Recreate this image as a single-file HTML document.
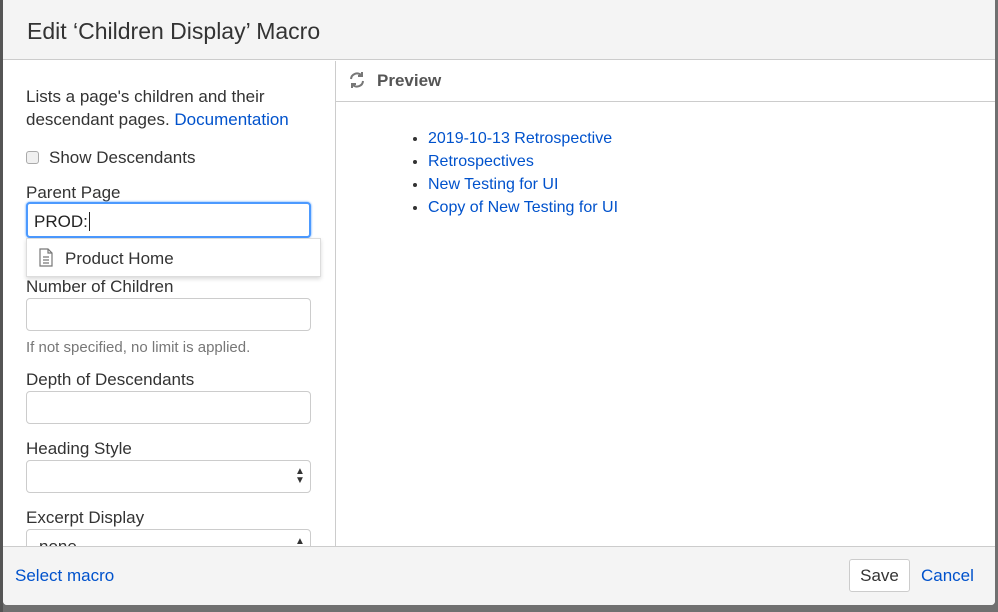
<!DOCTYPE html>
<html><head><style>
*{box-sizing:border-box;margin:0;padding:0}
body{width:998px;height:612px;background:#707070;font-family:"Liberation Sans",sans-serif;position:relative;overflow:hidden;color:#333}
.a{position:absolute}
.dlg{left:3px;top:0;width:992px;height:605px;background:#fff;border-radius:0 0 4px 4px;overflow:hidden}
.lbl{font-size:17px;color:#333;left:26px}
.inp{left:26px;width:285px;height:33px;border:1px solid #ccc;border-radius:4px;background:#fff}
a,.lk{color:#0052cc;text-decoration:none}
li{color:#333}
li span{color:#0052cc}
</style></head><body>
<div class="a" style="left:0;top:0;width:3px;height:612px;background:#555"></div>
<div class="a dlg">
 <div class="a" style="left:0;top:0;width:992px;height:60px;background:#f4f4f4;border-bottom:1px solid #ccc"></div>
 <div class="a" style="left:24px;top:18px;font-size:23px;color:#333">Edit ‘Children Display’ Macro</div>
 <div class="a" style="left:332px;top:61px;width:1px;height:486px;background:#ccc"></div>
 <div class="a" style="left:333px;top:61px;width:659px;height:41px;border-bottom:1px solid #ccc"></div>
 <svg class="a" style="left:344px;top:70px" width="20" height="20" viewBox="0 0 20 20" fill="none" stroke="#777" stroke-width="2"><path d="M4 9a6 6 0 0 1 10-4l1 1M16 11a6 6 0 0 1-10 4l-1-1"/><path d="M15 2v4h-4M5 18v-4h4" /></svg>
 <div class="a" style="left:374px;top:71px;font-size:17px;font-weight:bold;color:#555">Preview</div>
 <div class="a" style="left:23px;top:85px;font-size:17px;line-height:23px;width:300px">Lists a page's children and their descendant pages. <span class="lk">Documentation</span></div>
 <div class="a" style="left:23px;top:151px;width:13px;height:13px;border:1px solid #aaa;border-radius:3px;background:#f0f0f0"></div>
 <div class="a lbl" style="left:46px;top:148px">Show Descendants</div>
 <div class="a lbl" style="left:23px;top:183px">Parent Page</div>
 <div class="a inp" style="left:23px;top:202px;height:36px;border:2px solid #4c9aff;box-shadow:0 0 2px #4c9aff"></div>
 <div class="a" style="left:31px;top:212px;font-size:17px;color:#222">PROD:<span style="border-left:1px solid #222;margin-left:1px"></span></div>
 <div class="a" style="left:23px;top:238px;width:295px;height:39px;background:#fff;border:1px solid #ddd;box-shadow:0 2px 4px rgba(0,0,0,.15)"></div>
 <svg class="a" style="left:35px;top:248px" width="16" height="20" viewBox="0 0 16 20" fill="none" stroke="#777" stroke-width="1.2"><path d="M2 1h8l4 4v13H2z M10 1v4h4"/><path d="M5 9h6M5 12h6M5 15h6"/></svg>
 <div class="a lbl" style="left:62px;top:249px">Product Home</div>
 <div class="a lbl" style="left:23px;top:277px">Number of Children</div>
 <div class="a inp" style="left:23px;top:298px"></div>
 <div class="a" style="left:23px;top:339px;font-size:15px;color:#777">If not specified, no limit is applied.</div>
 <div class="a lbl" style="left:23px;top:370px">Depth of Descendants</div>
 <div class="a inp" style="left:23px;top:391px"></div>
 <div class="a lbl" style="left:23px;top:439px">Heading Style</div>
 <div class="a inp" style="left:23px;top:460px"></div>
 <div class="a" style="left:292px;top:467px;font-size:10px;line-height:9px;color:#333">▲<br>▼</div>
 <div class="a lbl" style="left:23px;top:508px">Excerpt Display</div>
 <div class="a inp" style="left:23px;top:529px"></div>
 <div class="a" style="left:292px;top:536px;font-size:10px;color:#333">▲</div>
 <div class="a" style="left:36px;top:537px;font-size:17px;color:#333">none</div>
 <ul class="a" style="left:425px;top:127px;font-size:16px;line-height:23px;list-style:disc">
  <li><span>2019-10-13 Retrospective</span></li><li><span>Retrospectives</span></li><li><span>New Testing for UI</span></li><li><span>Copy of New Testing for UI</span></li>
 </ul>
 <div class="a" style="left:0;top:546px;width:992px;height:59px;background:#f4f4f4;border-top:1px solid #ccc"></div>
 <div class="a lk" style="left:12px;top:566px;font-size:17px">Select macro</div>
 <div class="a" style="left:846px;top:559px;width:61px;height:33px;border:1px solid #ccc;border-radius:3px;background:#fff;font-size:17px;text-align:center;line-height:31px;color:#333">Save</div>
 <div class="a lk" style="left:918px;top:566px;font-size:17px">Cancel</div>
</div>
</body></html>
